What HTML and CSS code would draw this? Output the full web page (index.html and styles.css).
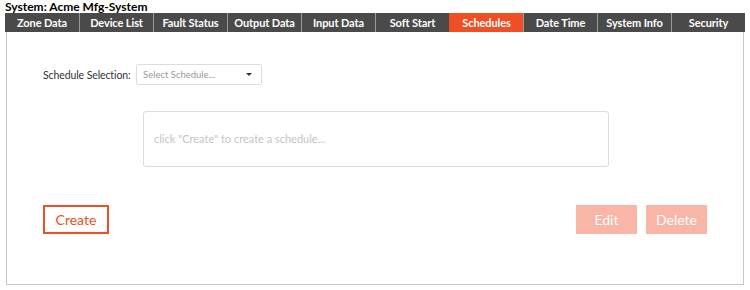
FILE: index.html
```html
<!DOCTYPE html>
<html lang="en">
<head>
  <meta charset="UTF-8" />
  <title>Schedules</title>
  <link rel="stylesheet" href="styles.css">
</head>
<body>
  <div class="system-title">System: Acme Mfg-System</div>

  <div class="tabs">
    <div class="tab">Zone Data</div>
    <div class="tab">Device List</div>
    <div class="tab">Fault Status</div>
    <div class="tab">Output Data</div>
    <div class="tab">Input Data</div>
    <div class="tab">Soft Start</div>
    <div class="tab tab-active">Schedules</div>
    <div class="tab">Date Time</div>
    <div class="tab">System Info</div>
    <div class="tab">Security</div>
  </div>

  <div class="panel">
    <div class="select-row">
      <span class="select-label">Schedule Selection:</span>
      <div class="select-box">
        <span>Select Schedule...</span>
        <span class="caret"></span>
      </div>
    </div>

    <div class="schedule-box">click "Create" to create a schedule...</div>

    <div class="button-row">
      <button class="btn btn-create">Create</button>
      <div class="right-buttons">
        <button class="btn btn-disabled">Edit</button>
        <button class="btn btn-disabled">Delete</button>
      </div>
    </div>
  </div>
</body>
</html>
```

FILE: styles.css
```css
body {
  margin: 0;
  padding: 0 5px 0 5px;
  font-family: Lato, "Open Sans", Arial, sans-serif;
  background-color: #fff;
  color: #333;
}
.system-title {
  font-size: 12px;
  font-weight: bold;
  color: #000;
  line-height: 13px;
  height: 13px;
}
.tabs {
  display: grid;
  grid-template-columns: repeat(10, 1fr);
  width: 740px;
  background-color: #4a4a4a;
}
.tab {
  height: 19px;
  line-height: 19px;
  text-align: center;
  color: #fff;
  font-size: 11px;
  font-weight: bold;
  letter-spacing: -0.1px;
  border-left: 1px solid #9a9a9a;
}
.tab:first-child {
  border-left: none;
}
.tab-active {
  background-color: #f04f24;
  border-left-color: #f04f24;
}
.panel {
  width: 738px;
  height: 253px;
  margin-left: 1px;
  border: 1px solid #c8c8c8;
  border-top: none;
  box-sizing: border-box;
  padding: 32px 36px 0 36px;
}
.select-row {
  display: flex;
  align-items: center;
}
.select-label {
  flex: 0 0 93px;
  white-space: nowrap;
  font-size: 10.5px;
  letter-spacing: -0.1px;
  color: #333;
}
.select-box {
  width: 126px;
  height: 21px;
  box-sizing: border-box;
  border: 1px solid #ddd;
  border-radius: 2px;
  display: flex;
  align-items: center;
  justify-content: space-between;
  padding: 0 9px 0 6px;
  font-size: 9.5px;
  color: #999;
}
.caret {
  width: 0;
  height: 0;
  border-left: 3px solid transparent;
  border-right: 3px solid transparent;
  border-top: 3px solid #333;
}
.schedule-box {
  margin: 26px 0 0 100px;
  width: 466px;
  height: 56px;
  box-sizing: border-box;
  border: 1px solid #ddd;
  border-radius: 3px;
  padding: 0 10px;
  line-height: 54px;
  font-size: 11px;
  color: #c4c4c4;
}
.button-row {
  display: flex;
  justify-content: space-between;
  margin-top: 38px;
}
.right-buttons {
  display: flex;
  gap: 9px;
}
.btn {
  font-family: Lato, "Open Sans", Arial, sans-serif;
  height: 29px;
  font-size: 14px;
  box-sizing: border-box;
  cursor: pointer;
  border-radius: 0;
}
.btn-create {
  width: 66px;
  background-color: #fff;
  color: #f04f24;
  border: 2px solid #f04f24;
}
.btn-disabled {
  width: 61px;
  background-color: #f9b6a6;
  color: #fff;
  border: none;
}
```
